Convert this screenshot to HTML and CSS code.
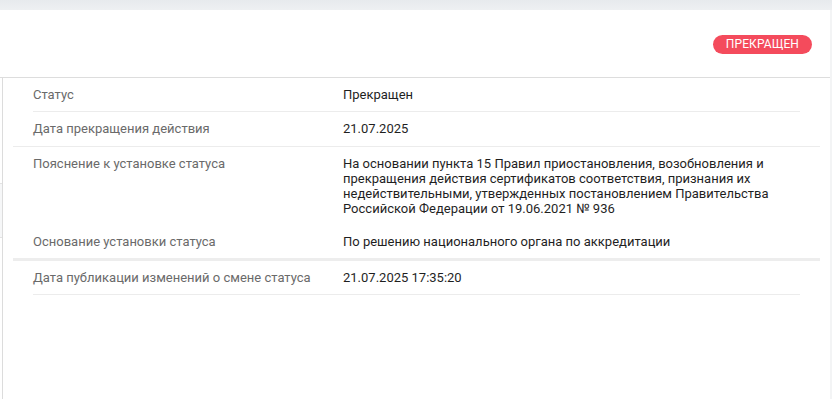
FILE: index.html
```html
<!DOCTYPE html>
<html lang="ru">
<head>
  <meta charset="UTF-8" />
  <title>Статус сертификата</title>
  <meta name="viewport" content="width=device-width, initial-scale=1.0"/>
  <link rel="stylesheet" href="styles.css">
</head>
<body>
  <div class="topbar"></div>
  <div class="page">
    <div class="card">
      <div class="card-head">
        <span class="badge">Прекращен</span>
      </div>
      <div class="card-body">
        <div class="gutter"><div class="gutter-mark"></div></div>
        <div class="details">
          <div class="row inset">
            <div class="label">Статус</div>
            <div class="value">Прекращен</div>
          </div>
          <div class="row">
            <div class="label">Дата прекращения действия</div>
            <div class="value">21.07.2025</div>
          </div>
          <div class="row plain">
            <div class="label">Пояснение к установке статуса</div>
            <div class="value">На основании пункта 15 Правил приостановления, возобновления и прекращения действия сертификатов соответствия, признания их недействительными, утвержденных постановлением Правительства Российской Федерации от 19.06.2021 № 936</div>
          </div>
          <div class="row thick">
            <div class="label">Основание установки статуса</div>
            <div class="value">По решению национального органа по аккредитации</div>
          </div>
          <div class="row inset">
            <div class="label">Дата публикации изменений о смене статуса</div>
            <div class="value">21.07.2025 17:35:20</div>
          </div>
        </div>
      </div>
    </div>
    <div class="scroll-strip"></div>
  </div>
</body>
</html>
```

FILE: styles.css
```css
body {
  margin: 0;
  background-color: #fff;
  font-family: Roboto, "Noto Sans", Arial, sans-serif;
  font-size: 13px;
  color: #212121;
}
.topbar {
  height: 10px;
  background: linear-gradient(#e7eaed, #eef0f2);
}
.page {
  display: flex;
  min-height: 389px;
}
.card {
  flex: 1;
  display: flex;
  flex-direction: column;
}
.scroll-strip {
  width: 2px;
  background-color: #f3f4f5;
}
.card-head {
  height: 68px;
  padding-top: 1px;
  padding-right: 18px;
  box-sizing: border-box;
  border-bottom: 1px solid #dddddd;
  display: flex;
  align-items: center;
  justify-content: flex-end;
}
.badge {
  background-color: #f44b5c;
  color: #fff;
  text-transform: uppercase;
  font-size: 12px;
  line-height: 19px;
  height: 19px;
  padding: 0 13px;
  border-radius: 10px;
  letter-spacing: 0.1px;
}
.card-body {
  flex: 1;
  display: flex;
}
.gutter {
  width: 2px;
}
.gutter-mark {
  margin-top: 105px;
  height: 53px;
  background-color: #f6f7f8;
  border-top: 1px solid #e3e3e3;
  border-bottom: 1px solid #e3e3e3;
}
.details {
  flex: 1;
  border-left: 1px solid #dcdcdc;
  padding: 0 10px;
}
.row {
  display: grid;
  grid-template-columns: 310px 1fr;
  padding: 9px 20px;
  line-height: 15.3px;
  border-bottom: 1px solid #ececec;
}
.row.inset {
  margin: 0 20px;
  padding: 9px 0;
}
.row.plain {
  border-bottom: none;
}
.row.thick {
  padding: 8.5px 20px;
  border-bottom: 3px solid #ededed;
}
.label {
  color: #6a6a6a;
}
.value {
  color: #1f1f1f;
}
```
